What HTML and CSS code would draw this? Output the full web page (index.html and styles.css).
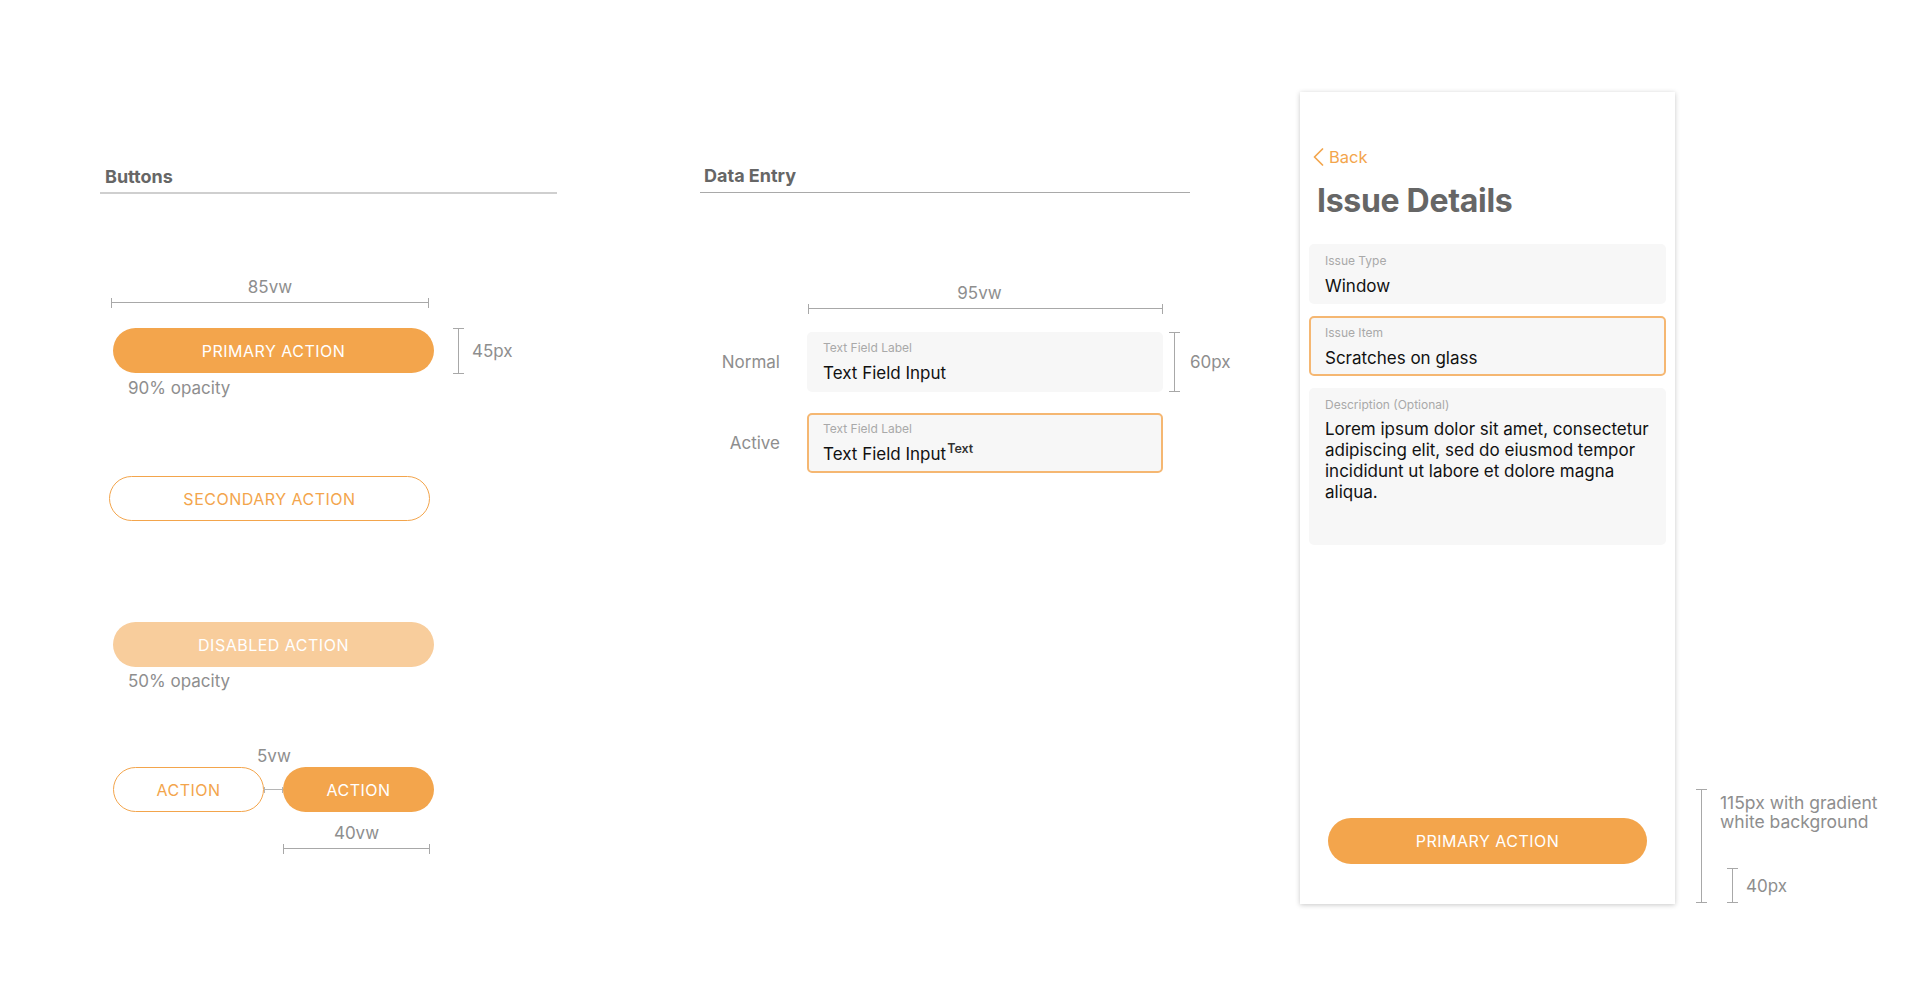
FILE: index.html
```html
<!DOCTYPE html>
<html lang="en">
<head>
<meta charset="utf-8">
<title>UI Spec</title>
<link rel="stylesheet" href="styles.css">
</head>
<body>
<div class="page">
  <section class="col col-buttons">
    <h2 class="section-title title-buttons">Buttons</h2>

    <div class="dim-h dim-85">
      <span class="dim-text">85vw</span>
      <span class="hline"></span>
    </div>

    <div class="btn-row">
      <button class="btn btn-primary btn-wide">PRIMARY ACTION</button>
      <span class="vline vline-45"></span>
      <span class="dim-text note-45">45px</span>
    </div>
    <p class="caption">90% opacity</p>

    <button class="btn btn-secondary btn-wide btn-secondary-pos">SECONDARY ACTION</button>

    <button class="btn btn-disabled btn-wide btn-disabled-pos">DISABLED ACTION</button>
    <p class="caption caption-50">50% opacity</p>

    <div class="pair">
      <span class="dim-text pair-gap-label">5vw</span>
      <div class="pair-row">
        <button class="btn btn-secondary btn-half">ACTION</button>
        <span class="gap-line"></span>
        <button class="btn btn-primary btn-half">ACTION</button>
      </div>
      <div class="dim-h dim-40">
        <span class="dim-text">40vw</span>
        <span class="hline"></span>
      </div>
    </div>
  </section>

  <section class="col col-data">
    <h2 class="section-title title-data">Data Entry</h2>

    <div class="dim-h dim-95">
      <span class="dim-text">95vw</span>
      <span class="hline"></span>
    </div>

    <div class="field-row">
      <span class="row-label">Normal</span>
      <div class="field">
        <span class="field-label">Text Field Label</span>
        <span class="field-value">Text Field Input</span>
      </div>
      <span class="vline vline-60"></span>
      <span class="dim-text note-60">60px</span>
    </div>

    <div class="field-row field-row-active">
      <span class="row-label">Active</span>
      <div class="field field-active">
        <span class="field-label">Text Field Label</span>
        <span class="field-value">Text Field Input<sup class="sup">Text</sup></span>
      </div>
    </div>
  </section>

  <div class="phone">
    <div class="phone-header">
      <a class="back">
        <svg class="chev" width="11" height="18" viewBox="0 0 11 18"><polyline points="9.5,1 1.5,9 9.5,17" fill="none" stroke="#F3A54C" stroke-width="1.7" stroke-linecap="round" stroke-linejoin="round"/></svg>
        <span>Back</span>
      </a>
      <h1 class="phone-title">Issue Details</h1>
    </div>
    <div class="phone-body">
      <div class="field field-phone">
        <span class="field-label">Issue Type</span>
        <span class="field-value">Window</span>
      </div>
      <div class="field field-phone field-active">
        <span class="field-label">Issue Item</span>
        <span class="field-value">Scratches on glass</span>
      </div>
      <div class="field field-phone field-desc">
        <span class="field-label">Description (Optional)</span>
        <span class="field-value desc-text">Lorem ipsum dolor sit amet, consectetur adipiscing elit, sed do eiusmod tempor incididunt ut labore et dolore magna aliqua.</span>
      </div>
    </div>
    <div class="phone-footer">
      <button class="btn btn-primary btn-phone">PRIMARY ACTION</button>
    </div>
  </div>

  <div class="notes">
    <span class="vline vline-115"></span>
    <div class="notes-body">
      <p class="note-text">115px with gradient<br>white background</p>
      <div class="note-40">
        <span class="vline vline-40"></span>
        <span class="dim-text note-40-text">40px</span>
      </div>
    </div>
  </div>
</div>
</body>
</html>
```

FILE: styles.css
```css
* { box-sizing: border-box; }

html, body {
  margin: 0;
  padding: 0;
  background: #ffffff;
}

body {
  font-family: Inter, "Noto Sans", "Liberation Sans", sans-serif;
  color: #111;
}

.page {
  display: flex;
  align-items: flex-start;
  width: 1920px;
  height: 991px;
  padding-left: 100px;
  overflow: hidden;
}

.col {
  display: flex;
  flex-direction: column;
  align-items: flex-start;
}

.col-buttons { width: 457px; }
.col-data { width: 490px; margin-left: 143px; }

.section-title {
  margin: 0;
  width: 100%;
  font-size: 18px;
  line-height: 20px;
  font-weight: 700;
  color: #666;
}

.title-buttons {
  margin-top: 167px;
  padding: 0 0 5px 5px;
  border-bottom: 2px solid #cfcfcf;
}

.title-data {
  margin-top: 166px;
  padding: 0 0 6px 4px;
  border-bottom: 1px solid #a9a9a9;
}

.dim-text {
  font-size: 17px;
  line-height: 18px;
  color: #8e8e8e;
  white-space: nowrap;
}

/* horizontal dimension */
.dim-h {
  display: flex;
  flex-direction: column;
  align-items: center;
}

.hline {
  position: relative;
  display: block;
  width: 100%;
  height: 10px;
  margin-top: 2px;
}
.hline::before {
  content: "";
  position: absolute;
  left: 0; right: 0; top: 4px;
  height: 1px;
  background: #a8a8a8;
}
.hline::after {
  content: "";
  position: absolute;
  left: 0; right: 0; top: 0;
  height: 10px;
  border-left: 1px solid #a8a8a8;
  border-right: 1px solid #a8a8a8;
}

.dim-85 { margin-top: 84px; margin-left: 11px; width: 318px; }
.dim-95 { margin-top: 91px; margin-left: 108px; width: 355px; }
.dim-95 .dim-text { margin-right: 12px; }

/* vertical dimension */
.vline {
  position: relative;
  display: block;
  width: 11px;
  flex: none;
}
.vline::before {
  content: "";
  position: absolute;
  top: 0; bottom: 0; left: 5px;
  width: 1px;
  background: #a8a8a8;
}
.vline::after {
  content: "";
  position: absolute;
  top: 0; bottom: 0; left: 0; right: 0;
  border-top: 1px solid #a8a8a8;
  border-bottom: 1px solid #a8a8a8;
}

/* buttons */
.btn {
  display: flex;
  align-items: center;
  justify-content: center;
  height: 45px;
  padding: 0;
  border-radius: 23px;
  font-family: inherit;
  font-size: 16px;
  letter-spacing: 0.5px;
  font-weight: 400;
  border: 1px solid transparent;
  flex: none;
}
.btn-wide { width: 321px; }
.btn-half { width: 151px; }

.btn-primary {
  background: #F3A54C;
  color: #fff;
}
.btn-secondary {
  background: #fff;
  border-color: #F3A54C;
  color: #F3A54C;
}
.btn-disabled {
  background: #F8CD9C;
  color: #fff;
}

.btn-row {
  display: flex;
  align-items: center;
  margin-top: 19px;
  margin-left: 13px;
}
.vline-45 { height: 46px; margin-left: 19px; margin-top: 1px; }
.note-45 { margin-left: 8px; }

.caption {
  margin: 5px 0 0 28px;
  font-size: 17px;
  line-height: 18px;
  color: #8e8e8e;
}

.btn-secondary-pos { margin-top: 79px; margin-left: 9px; }
.btn-disabled-pos { margin-top: 101px; margin-left: 13px; }
.caption-50 { margin-top: 5px; }

.pair {
  display: flex;
  flex-direction: column;
  margin-top: 57px;
  margin-left: 13px;
  width: 321px;
}
.pair-gap-label {
  align-self: flex-start;
  margin-left: 144px;
}
.pair-row {
  display: flex;
  align-items: center;
  margin-top: 2px;
}
.gap-line {
  position: relative;
  width: 19px;
  height: 6px;
  flex: none;
}
.gap-line::before {
  content: "";
  position: absolute;
  left: 0; right: 0; top: 2px;
  height: 1px;
  background: #b5b5b5;
}
.gap-line::after {
  content: "";
  position: absolute;
  inset: 0;
  border-left: 1px solid #b5b5b5;
  border-right: 1px solid #b5b5b5;
}
.dim-40 {
  margin-top: 12px;
  margin-left: 170px;
  width: 147px;
}

/* data entry */
.field-row {
  display: flex;
  align-items: center;
  margin-top: 18px;
}
.field-row-active { margin-top: 21px; }

.row-label {
  width: 80px;
  text-align: right;
  font-size: 17px;
  line-height: 18px;
  color: #8e8e8e;
  margin-right: 27px;
}

.field {
  display: flex;
  flex-direction: column;
  width: 356px;
  height: 60px;
  padding: 7px 12px 0 14px;
  background: #f7f7f7;
  border: 2px solid transparent;
  border-radius: 5px;
  flex: none;
}
.field-active { border-color: #F5B772; }

.field-label {
  font-size: 12px;
  line-height: 14px;
  color: #a9a9a9;
  white-space: nowrap;
}
.field-value {
  margin-top: 8px;
  font-size: 17px;
  line-height: 20px;
  color: #111;
  white-space: nowrap;
}
.sup {
  font-size: 12.5px;
  font-weight: 600;
  color: #333;
  vertical-align: 7px;
  line-height: 0;
  margin-left: 1px;
}

.vline-60 { height: 60px; margin-left: 6px; }
.note-60 { margin-left: 10px; }

/* phone */
.phone {
  display: flex;
  flex-direction: column;
  margin-left: 110px;
  margin-top: 92px;
  width: 375px;
  height: 812px;
  background: #fff;
  box-shadow: 0 1px 5px rgba(0, 0, 0, 0.22);
}

.phone-header {
  display: flex;
  flex-direction: column;
  padding: 56px 0 0 13px;
  height: 139px;
}
.back {
  display: flex;
  align-items: center;
  color: #F3A54C;
  font-size: 16.5px;
  line-height: 18px;
}
.chev { display: block; margin-right: 5px; }

.phone-title {
  margin: 15px 0 0 4px;
  font-size: 32px;
  line-height: 40px;
  font-weight: 700;
  color: #666;
  letter-spacing: -0.3px;
}

.phone-body {
  display: flex;
  flex-direction: column;
  gap: 12px;
  padding: 13px 0 0 9px;
}
.field-phone { width: 357px; padding-top: 8px; }
.field-desc { height: 157px; }
.desc-text {
  white-space: normal;
  line-height: 21px;
  margin-top: 7px;
}

.phone-footer {
  margin-top: auto;
  padding: 0 0 40px 28px;
}
.btn-phone { width: 319px; height: 46px; }

/* notes */
.notes {
  display: flex;
  margin-top: 789px;
  margin-left: 21px;
}
.vline-115 { height: 114px; }
.notes-body {
  display: flex;
  flex-direction: column;
  margin-left: 13px;
}
.note-text {
  margin: 4px 0 0;
  font-size: 17.5px;
  line-height: 19px;
  color: #8e8e8e;
}
.note-40 {
  display: flex;
  align-items: center;
  margin-top: 37px;
  margin-left: 7px;
}
.vline-40 { height: 35px; }
.note-40-text { margin-left: 8px; }
```
